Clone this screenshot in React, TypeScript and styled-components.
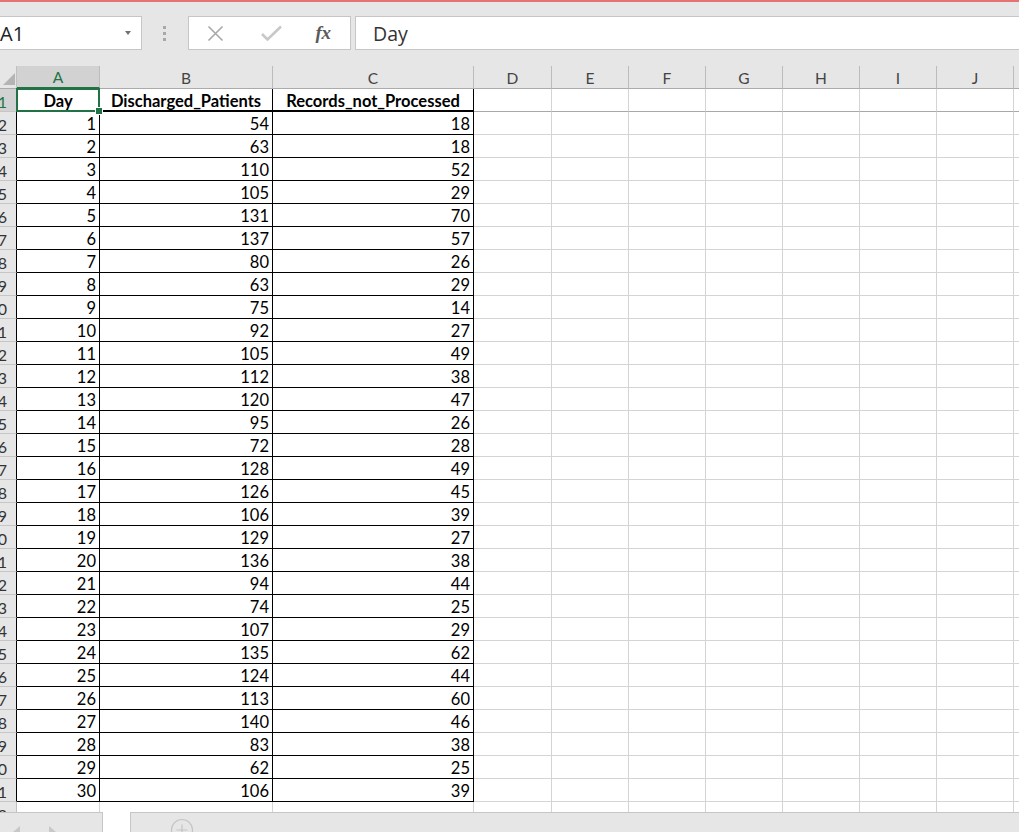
import React from 'react'
import styled, { createGlobalStyle } from 'styled-components'

const GlobalStyle = createGlobalStyle`
  html, body { margin: 0; padding: 0; background: #fff; overflow: hidden; }
  #root { width: 1019px; height: 832px; }
`

const green = '#217346'
const cellFont = 'Lato, "Open Sans", sans-serif'
const uiFont = '"Open Sans", "Noto Sans", sans-serif'

const rows: [number, number][] = [
  [54, 18], [63, 18], [110, 52], [105, 29], [131, 70], [137, 57], [80, 26], [63, 29], [75, 14], [92, 27],
  [105, 49], [112, 38], [120, 47], [95, 26], [72, 28], [128, 49], [126, 45], [106, 39], [129, 27], [136, 38],
  [94, 44], [74, 25], [107, 29], [135, 62], [124, 44], [113, 60], [140, 46], [83, 38], [62, 25], [106, 39]
]

const letters = ['A', 'B', 'C', 'D', 'E', 'F', 'G', 'H', 'I', 'J', 'K']
const emptyCols = 8 // D..K

const Window = styled.div`
  width: 1019px;
  height: 832px;
  display: flex;
  flex-direction: column;
  overflow: hidden;
  background: #fff;
`

const Toolbar = styled.div`
  height: 66px;
  box-sizing: border-box;
  flex-shrink: 0;
  background: #e6e6e6;
  border-top: 2px solid #e57373;
  padding-top: 14px;
  display: flex;
  align-items: flex-start;
`

const NameBox = styled.div`
  margin-left: -11px;
  width: 153px;
  height: 34px;
  box-sizing: border-box;
  background: #fff;
  border: 1px solid #c6c6c6;
  padding: 0 10px 0 10px;
  display: flex;
  align-items: center;
  justify-content: space-between;
  font: 400 20px ${uiFont};
  color: #222;
`

const Caret = styled.span`
  width: 0;
  height: 0;
  border-left: 3.5px solid transparent;
  border-right: 3.5px solid transparent;
  border-top: 4px solid #707070;
`

const Dots = styled.div`
  margin: 10px 0 0 21px;
  display: flex;
  flex-direction: column;
  gap: 3px;
`

const Dot = styled.span`
  width: 3px;
  height: 3px;
  background: #a8a8a8;
`

const IconBox = styled.div`
  margin-left: 22px;
  width: 163px;
  height: 34px;
  box-sizing: border-box;
  background: #fff;
  border: 1px solid #c6c6c6;
  display: flex;
  align-items: center;
`

const IconSlot = styled.div<{ $w: number }>`
  width: ${p => p.$w}px;
  display: flex;
  justify-content: center;
  align-items: center;
`

const Fx = styled.span`
  font: italic 700 19px "Liberation Serif", "DejaVu Serif", serif;
  color: #5a5a5a;
  letter-spacing: -0.5px;
`

const FormulaBox = styled.div`
  margin-left: 4px;
  margin-right: -10px;
  flex: 1;
  height: 34px;
  box-sizing: border-box;
  background: #fff;
  border: 1px solid #c6c6c6;
  padding-left: 17px;
  display: flex;
  align-items: center;
  font: 400 19.5px ${uiFont};
  color: #333;
`

const Sheet = styled.div`
  flex: 1;
  overflow: hidden;
  display: grid;
  grid-template-columns: 17px 83px 173px 201px 78px repeat(6, 77px) 1fr;
  grid-auto-rows: 23px;
  align-content: start;
`

const Corner = styled.div`
  box-sizing: border-box;
  background: #e6e6e6;
  border-right: 1px solid #c0c0c0;
  border-bottom: 1px solid #ababab;
  display: flex;
  align-items: flex-end;
  padding: 0 0 3px 3px;
`

const ColHead = styled.div<{ $active?: boolean }>`
  box-sizing: border-box;
  background: ${p => (p.$active ? '#d2d2d2' : '#e6e6e6')};
  color: ${p => (p.$active ? green : '#444')};
  border-right: 1px solid #bcbcbc;
  border-bottom: ${p => (p.$active ? `2px solid ${green}` : '1px solid #ababab')};
  display: flex;
  align-items: center;
  justify-content: center;
  font: 400 15.5px ${cellFont};
  padding-top: 1px;
`

const RowHead = styled.div<{ $active?: boolean; $edge?: boolean }>`
  box-sizing: border-box;
  overflow: hidden;
  background: ${p => (p.$active ? '#d2d2d2' : '#e6e6e6')};
  color: ${p => (p.$active ? green : '#333')};
  border-right: 1px solid ${p => (p.$edge ? '#000' : '#c0c0c0')};
  border-bottom: 1px solid #c6c6c6;
  display: flex;
  align-items: center;
  justify-content: flex-end;
  padding: 2px 9px 0 0;
  font: 400 16px ${cellFont};
  white-space: nowrap;
`

const Cell = styled.div<{ $right: string; $bottom: string; $bw?: number; $center?: boolean; $bold?: boolean }>`
  position: relative;
  box-sizing: border-box;
  border-right: 1px solid ${p => p.$right};
  border-bottom: ${p => p.$bw ?? 1}px solid ${p => p.$bottom};
  padding: 2px 3px 0;
  display: flex;
  align-items: center;
  justify-content: ${p => (p.$center ? 'center' : 'flex-end')};
  font: ${p => (p.$bold ? 700 : 400)} 16.5px ${cellFont};
  color: #000;
  white-space: nowrap;
`

const Selection = styled.div`
  position: absolute;
  top: -1px;
  left: -1px;
  right: -1px;
  bottom: -2px;
  border: 2px solid ${green};
  z-index: 2;
  pointer-events: none;
`

const Handle = styled.span`
  position: absolute;
  right: -5px;
  bottom: -5px;
  width: 6px;
  height: 6px;
  background: ${green};
  border: 1px solid #fff;
`

const Footer = styled.div`
  height: 20px;
  flex-shrink: 0;
  display: flex;
  overflow: hidden;
`

const NavBox = styled.div`
  width: 103px;
  box-sizing: border-box;
  background: #e6e6e6;
  border-top: 1px solid #c6c6c6;
  border-right: 1px solid #c6c6c6;
  padding: 13px 0 0 13px;
  display: flex;
  align-items: flex-start;
  gap: 29px;
`

const FooterGap = styled.div`
  width: 27px;
  background: #fff;
`

const SheetTabs = styled.div`
  flex: 1;
  box-sizing: border-box;
  background: #e6e6e6;
  border-top: 1px solid #c6c6c6;
  border-left: 1px solid #c6c6c6;
  padding: 5px 0 0 39px;
`

const Arrow = ({ dir }: { dir: 'left' | 'right' }) => (
  <svg width="7" height="12" viewBox="0 0 7 12">
    <path d={dir === 'left' ? 'M7 0 L0 6 L7 12 Z' : 'M0 0 L7 6 L0 12 Z'} fill="#c8c8c8" />
  </svg>
)

const App = () => {
  return (
    <Window>
      <GlobalStyle />
      <Toolbar>
        <NameBox>
          <span>A1</span>
          <Caret />
        </NameBox>
        <Dots>
          <Dot />
          <Dot />
          <Dot />
        </Dots>
        <IconBox>
          <IconSlot $w={52}>
            <svg width="17" height="17" viewBox="0 0 17 17">
              <path d="M1.5 1.5 L15.5 15.5 M15.5 1.5 L1.5 15.5" stroke="#a8a8a8" strokeWidth="1.6" fill="none" />
            </svg>
          </IconSlot>
          <IconSlot $w={60}>
            <svg width="21" height="16" viewBox="0 0 21 16">
              <path d="M1 9 L6.5 14.5 L20 1.5" stroke="#c8c8c8" strokeWidth="2.6" fill="none" />
            </svg>
          </IconSlot>
          <IconSlot $w={44}>
            <Fx>fx</Fx>
          </IconSlot>
        </IconBox>
        <FormulaBox>Day</FormulaBox>
      </Toolbar>

      <Sheet>
        <Corner>
          <svg width="12" height="12" viewBox="0 0 12 12">
            <path d="M12 0 L12 12 L0 12 Z" fill="#b4b4b4" />
          </svg>
        </Corner>
        {letters.map((l, i) => (
          <ColHead key={l} $active={i === 0}>{i < 10 ? l : ''}</ColHead>
        ))}

        <RowHead $active $edge>1</RowHead>
        <Cell $right="#000" $bottom="#000" $bw={2} $center $bold>
          Day
          <Selection>
            <Handle />
          </Selection>
        </Cell>
        <Cell $right="#000" $bottom="#000" $bw={2} $center $bold>Discharged_Patients</Cell>
        <Cell $right="#000" $bottom="#000" $bw={2} $center $bold>Records_not_Processed</Cell>
        {Array.from({ length: emptyCols }).map((_, i) => (
          <Cell key={i} $right="#d4d4d4" $bottom="#a8a8a8" />
        ))}

        {rows.map(([discharged, records], r) => (
          <React.Fragment key={r}>
            <RowHead $edge>{r + 2}</RowHead>
            <Cell $right="#000" $bottom="#000">{r + 1}</Cell>
            <Cell $right="#000" $bottom="#000">{discharged}</Cell>
            <Cell $right="#000" $bottom="#000">{records}</Cell>
            {Array.from({ length: emptyCols }).map((_, i) => (
              <Cell key={i} $right="#d4d4d4" $bottom="#d4d4d4" />
            ))}
          </React.Fragment>
        ))}

        <RowHead>32</RowHead>
        {Array.from({ length: 11 }).map((_, i) => (
          <Cell key={i} $right="#d4d4d4" $bottom="#d4d4d4" />
        ))}
      </Sheet>

      <Footer>
        <NavBox>
          <Arrow dir="left" />
          <Arrow dir="right" />
        </NavBox>
        <FooterGap />
        <SheetTabs>
          <svg width="24" height="24" viewBox="0 0 24 24">
            <circle cx="12" cy="12" r="10.5" stroke="#c4c4c4" strokeWidth="1.2" fill="none" />
            <path d="M12 6.5 V17.5 M6.5 12 H17.5" stroke="#c4c4c4" strokeWidth="1.2" />
          </svg>
        </SheetTabs>
      </Footer>
    </Window>
  )
}

export default App
